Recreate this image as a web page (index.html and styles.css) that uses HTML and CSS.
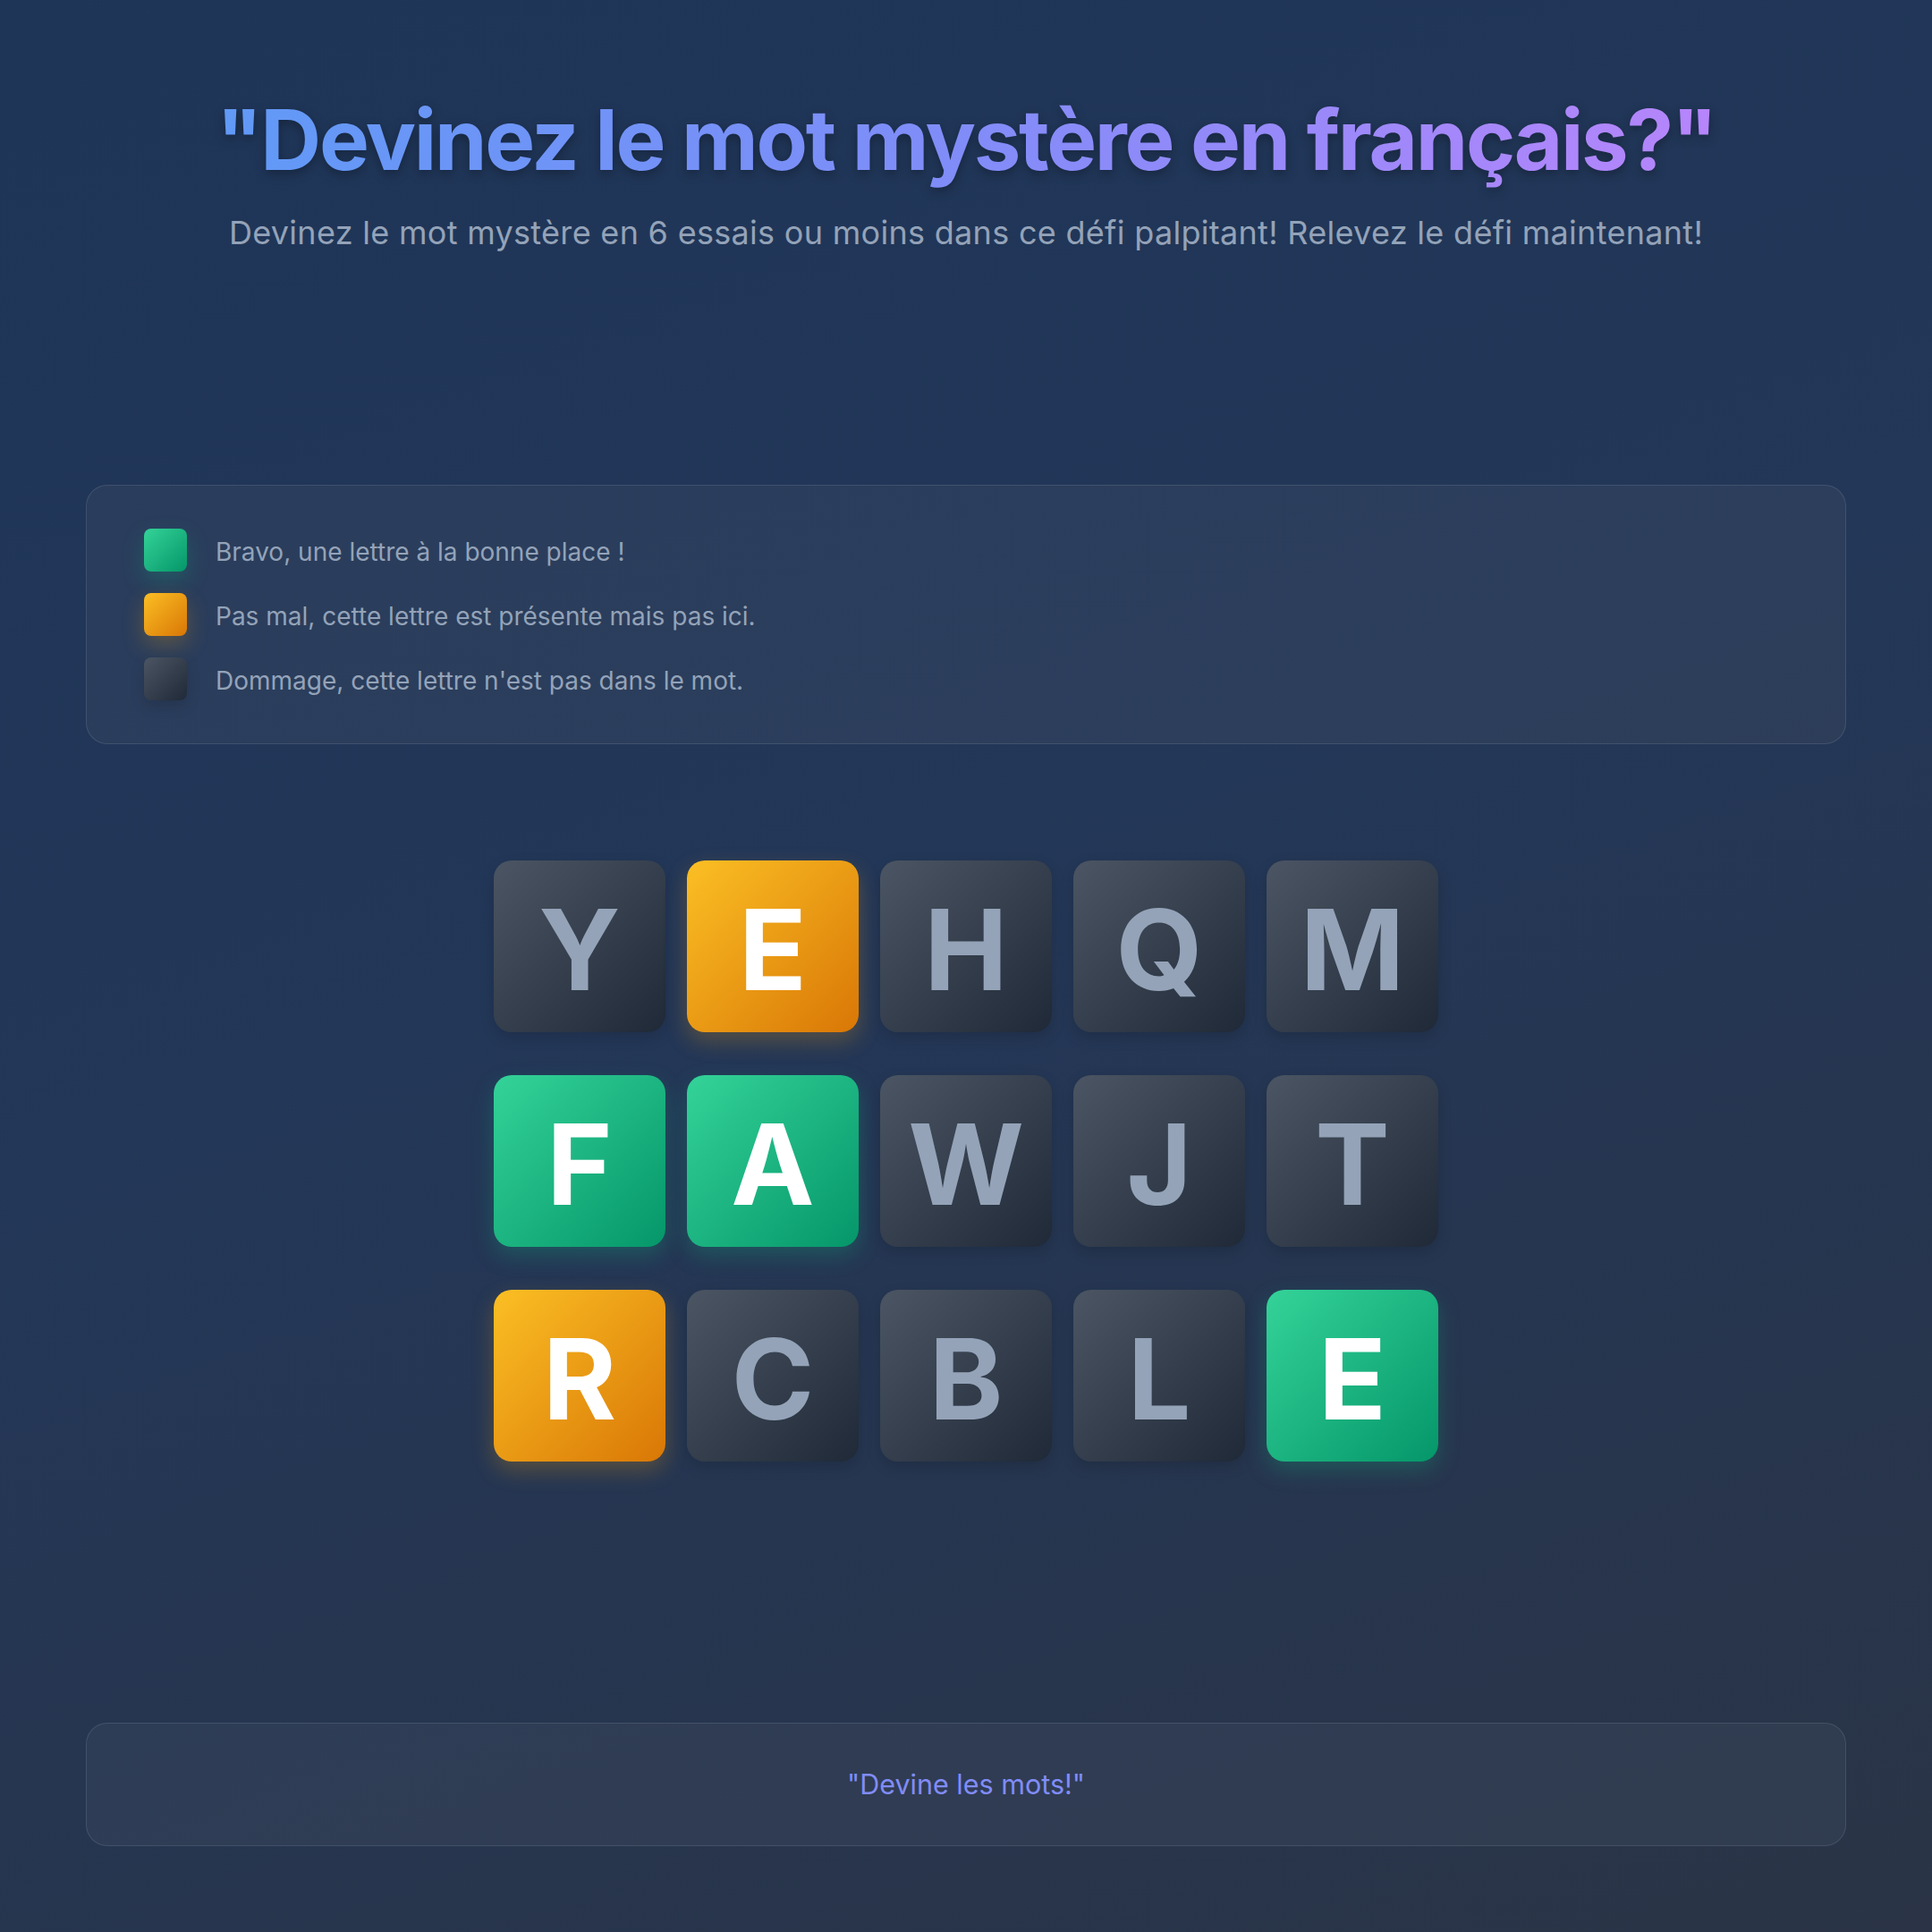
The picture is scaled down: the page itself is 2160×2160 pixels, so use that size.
FILE: index.html
```html
<!DOCTYPE html>
<html lang="fr">
<head>
<meta charset="utf-8">
<title>Devinez le mot mystère</title>
<link rel="stylesheet" href="styles.css">
</head>
<body>
<div class="page">
  <header class="header">
    <h1 class="title">"Devinez le mot mystère en français?"</h1>
    <p class="subtitle">Devinez le mot mystère en 6 essais ou moins dans ce défi palpitant! Relevez le défi maintenant!</p>
  </header>

  <section class="legend">
    <div class="legend-row"><span class="swatch correct"></span><span class="legend-text">Bravo, une lettre à la bonne place !</span></div>
    <div class="legend-row"><span class="swatch present"></span><span class="legend-text">Pas mal, cette lettre est présente mais pas ici.</span></div>
    <div class="legend-row"><span class="swatch absent"></span><span class="legend-text">Dommage, cette lettre n'est pas dans le mot.</span></div>
  </section>

  <section class="board">
    <div class="tile absent">Y</div>
    <div class="tile present">E</div>
    <div class="tile absent">H</div>
    <div class="tile absent">Q</div>
    <div class="tile absent">M</div>
    <div class="tile correct">F</div>
    <div class="tile correct">A</div>
    <div class="tile absent">W</div>
    <div class="tile absent">J</div>
    <div class="tile absent">T</div>
    <div class="tile present">R</div>
    <div class="tile absent">C</div>
    <div class="tile absent">B</div>
    <div class="tile absent">L</div>
    <div class="tile correct">E</div>
  </section>

  <footer class="footer">
    <span class="footer-text">"Devine les mots!"</span>
  </footer>
</div>
</body>
</html>
```

FILE: styles.css
```css
* { box-sizing: border-box; }

html, body {
  margin: 0;
  padding: 0;
}

body {
  min-height: 100vh;
  font-family: Inter, "Noto Sans", "Liberation Sans", sans-serif;
  background: linear-gradient(160deg, #1e3558 0%, #233758 45%, #2a3446 100%);
  color: #94a3b8;
}

.page {
  min-height: 2160px;
  padding: 96px;
  display: flex;
  flex-direction: column;
}

.header {
  text-align: center;
}

.title {
  margin: 0;
  font-size: 94px;
  line-height: 120px;
  font-weight: 700;
  letter-spacing: -0.025em;
  background: linear-gradient(90deg, #5b9cf6 0%, #818cf8 50%, #c084fc 100%);
  -webkit-background-clip: text;
  background-clip: text;
  color: transparent;
  filter: drop-shadow(0 4px 6px rgba(0, 0, 0, 0.3));
}

.subtitle {
  margin: 17px 0 0;
  font-size: 36px;
  line-height: 1.5;
  letter-spacing: 0.3px;
  color: #94a3b8;
}

.legend {
  margin-top: 255px;
  padding: 48px 64px;
  border: 1px solid rgba(148, 163, 184, 0.2);
  border-radius: 24px;
  background: rgba(71, 85, 105, 0.25);
  display: flex;
  flex-direction: column;
  gap: 24px;
}

.legend-row {
  display: flex;
  align-items: center;
  gap: 32px;
}

.swatch {
  width: 48px;
  height: 48px;
  border-radius: 8px;
  flex: none;
}

.legend-text {
  font-size: 28px;
  line-height: 1.5;
  padding-top: 3px;
  color: #94a3b8;
}

.correct {
  background: linear-gradient(135deg, #34d399 0%, #059669 100%);
  box-shadow: 0 10px 25px rgba(16, 185, 129, 0.25);
}

.present {
  background: linear-gradient(135deg, #fbbf24 0%, #d97706 100%);
  box-shadow: 0 10px 25px rgba(245, 158, 11, 0.25);
}

.absent {
  background: linear-gradient(135deg, #4b5563 0%, #1f2937 100%);
  box-shadow: 0 6px 16px rgba(0, 0, 0, 0.15);
}

.board {
  margin-top: 130px;
  display: grid;
  grid-template-columns: repeat(5, 192px);
  grid-auto-rows: 192px;
  gap: 48px 24px;
  justify-content: center;
}

.tile {
  border-radius: 20px;
  display: flex;
  align-items: center;
  justify-content: center;
  padding-top: 7px;
  font-size: 125px;
  font-weight: 700;
  line-height: 1;
  color: #ffffff;
}

.tile.absent {
  color: #94a3b8;
}

.footer {
  margin-top: auto;
  padding: 47px 24px;
  border: 1px solid rgba(148, 163, 184, 0.2);
  border-radius: 24px;
  background: rgba(71, 85, 105, 0.25);
  text-align: center;
}

.footer-text {
  font-size: 30.5px;
  line-height: 42px;
  color: #818cf8;
}
```
